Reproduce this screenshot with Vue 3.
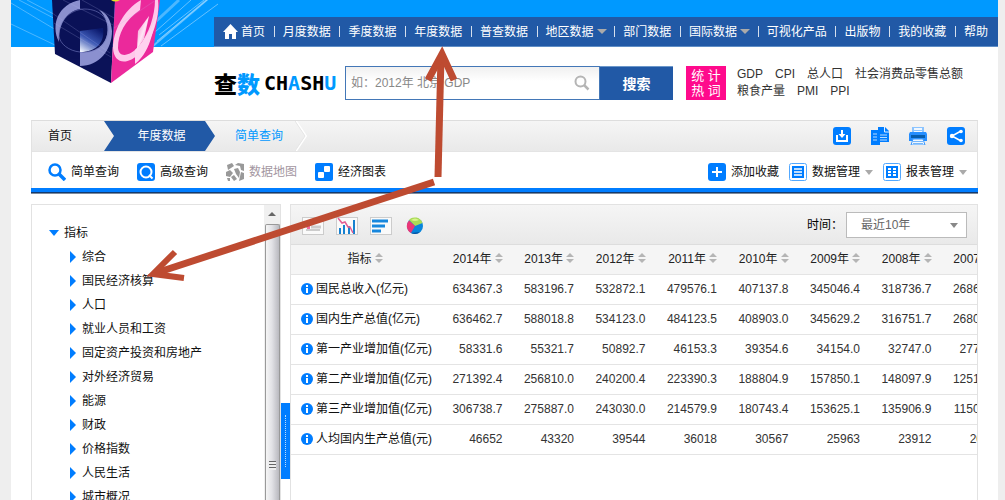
<script setup>
import { ref } from 'vue'

const nav = [
  { label: '首页', home: true },
  { label: '月度数据' },
  { label: '季度数据' },
  { label: '年度数据' },
  { label: '普查数据' },
  { label: '地区数据', menu: true },
  { label: '部门数据' },
  { label: '国际数据', menu: true },
  { label: '可视化产品' },
  { label: '出版物' },
  { label: '我的收藏' },
  { label: '帮助' },
]

const hotWords = ['GDP', 'CPI', '总人口', '社会消费品零售总额', '粮食产量', 'PMI', 'PPI']

const tree = [
  '综合', '国民经济核算', '人口', '就业人员和工资', '固定资产投资和房地产',
  '对外经济贸易', '能源', '财政', '价格指数', '人民生活', '城市概况',
]

const years = ['2014年', '2013年', '2012年', '2011年', '2010年', '2009年', '2008年', '2007年']
const rows = [
  { name: '国民总收入(亿元)', values: ['634367.3', '583196.7', '532872.1', '479576.1', '407137.8', '345046.4', '318736.7', '268631.0'] },
  { name: '国内生产总值(亿元)', values: ['636462.7', '588018.8', '534123.0', '484123.5', '408903.0', '345629.2', '316751.7', '268019.4'] },
  { name: '第一产业增加值(亿元)', values: ['58331.6', '55321.7', '50892.7', '46153.3', '39354.6', '34154.0', '32747.0', '27788.0'] },
  { name: '第二产业增加值(亿元)', values: ['271392.4', '256810.0', '240200.4', '223390.3', '188804.9', '157850.1', '148097.9', '125145.4'] },
  { name: '第三产业增加值(亿元)', values: ['306738.7', '275887.0', '243030.0', '214579.9', '180743.4', '153625.1', '135906.9', '115090.9'] },
  { name: '人均国内生产总值(元)', values: ['46652', '43320', '39544', '36018', '30567', '25963', '23912', '20337'] },
]

const keyword = ref('')
const period = ref('10')
</script>

<template>
  <div class="page">
    <header class="banner">
      <svg class="cube" viewBox="0 0 210 90" aria-hidden="true">
        <defs>
          <linearGradient id="ball" x1="0.7" y1="0" x2="0.1" y2="1">
            <stop offset="0" stop-color="#0c1a6e" />
            <stop offset="0.5" stop-color="#3c58b4" />
            <stop offset="1" stop-color="#eef2fc" />
          </linearGradient>
          <linearGradient id="sheen" x1="0" y1="0" x2="1" y2="1">
            <stop offset="0" stop-color="#f47cc4" />
            <stop offset="0.5" stop-color="#ffe6f6" />
            <stop offset="1" stop-color="#f04cae" />
          </linearGradient>
        </defs>
        <g stroke="#a8dcff" fill="none">
          <path d="M0 3l55 33M0 24l46 22M8 0l46 24M16 0l38 20" stroke-width="1" opacity=".45" />
          <path d="M142 46L198 -2" stroke-width="2" opacity=".6" />
          <path d="M150 46L207 4M148 35l45-35M144 32l36-32M146 41l50-41" stroke-width="1" opacity=".6" />
          <path d="M140 26l28-26" stroke-width="3" opacity=".45" />
        </g>
        <path d="M41 0H104L100 83L44 54Z" fill="#0b1258" />
        <path d="M104 0H149L142 52L100 83Z" fill="#ec2a9c" />
        <path d="M69 0C48 4 39 24 48 42C47 24 56 11 69 9Z" fill="#8b90cf" />
        <path d="M88 10C95 16 99 28 95 38C91 48 82 53 69 52V66C88 66 101 50 101 31C100 20 96 13 88 10Z" fill="#8b90cf" />
        <path d="M48 36C48 20 59 10 73 9C91 9 99 21 97 33C94 48 83 53 69 52C58 51 49 44 48 36" fill="none" stroke="#7379be" stroke-width="1" opacity=".6" />
        <path d="M69 31L92 28C94 42 86 52 69 52Z" fill="url(#ball)" />
        <path d="M130 0C112 10 102 32 102 48C103 64 116 66 129 53C142 40 149 16 147 0H144C144 15 138 34 128 46C118 57 108 58 107 48C107 34 114 20 129 10Z" fill="#ffc8ea" />
        <path d="M124 50V64C133 57 138 46 141 35L147 12C141 27 134 41 124 50Z" fill="#ffd3ef" />
        <path d="M127 31L138 16L133 39L126 49Z" fill="url(#sheen)" />
        <path d="M41 13L99 53M43 23l57 34M52 0l50 25M71 0l32 18M103 28L145 0" stroke="#b8b8ec" stroke-width="1" opacity=".2" />
        <path d="M100 0Q104 3 109 0Z" fill="#e8e024" />
      </svg>
      <nav class="nav">
        <a v-for="item in nav" :key="item.label" href="#">
          <svg v-if="item.home" class="home" viewBox="0 0 15 15" aria-hidden="true">
            <path d="M7.500 0L15 8H13V15H9V10H6V15H2V8H0Z" fill="#fff" />
          </svg>{{ item.label }}<i v-if="item.menu" class="caret"></i>
        </a>
      </nav>
    </header>

    <section class="search-row">
      <div class="brand"><span class="cn">查<b>数</b></span><span class="en">CH<b>A</b>SH<b>U</b></span></div>
      <form class="search" @submit.prevent>
        <div class="field">
          <input v-model="keyword" type="text" aria-label="搜索关键词" placeholder="如：2012年 北京 GDP" />
          <svg viewBox="0 0 16 16" aria-hidden="true">
            <circle cx="6.500" cy="6.500" r="5" fill="none" stroke="#b5b5b5" stroke-width="2" />
            <path d="M10 10l4.500 4.500" stroke="#b5b5b5" stroke-width="2.500" />
          </svg>
        </div>
        <button type="submit">搜索</button>
      </form>
      <div class="hot-badge">统 计<br />热 词</div>
      <div class="hot-words"><a v-for="w in hotWords" :key="w" href="#">{{ w }}</a></div>
    </section>

    <main class="content">
      <section class="top-box">
        <div class="crumbs">
          <a class="crumb-home" href="#">首页</a>
          <a class="crumb-year" href="#">年度数据</a>
          <a class="crumb-now" href="#">简单查询</a>
          <svg class="chevron" viewBox="0 0 12 30" aria-hidden="true">
            <path d="M1 0L11 15L1 30" fill="none" stroke="#fff" stroke-width="2" />
            <path d="M0 0L10 15L0 30" fill="none" stroke="#e4e4e4" stroke-width="1" />
          </svg>
          <div class="actions">
            <button type="button" aria-label="下载">
              <svg viewBox="0 0 18 18"><rect width="18" height="18" rx="3" fill="#007dff" /><path d="M4 8v6h10V8" fill="none" stroke="#fff" stroke-width="2" /><path d="M9 3v5" stroke="#fff" stroke-width="2" /><path d="M5.500 7h7L9 11Z" fill="#fff" /></svg>
            </button>
            <button type="button" aria-label="复制">
              <svg viewBox="0 0 18 18"><path d="M0 3h7v12h2v3H0Z" fill="#007dff" /><path d="M7 0h7l4 4v11H7Z" fill="#007dff" /><path d="M13.500 0v5H18" fill="none" stroke="#e8f2ff" /><path d="M2 7h4M2 10h4M2 13h4M9 8h7M9 10.500h7M9 13h7" stroke="#b9dcff" /></svg>
            </button>
            <button type="button" aria-label="打印">
              <svg viewBox="0 0 18 18"><path d="M3 0h12v6H3Z" fill="#8cc4ff" /><path d="M5 1h8v5H5Z" fill="#eff7ff" /><path d="M5 3.500h8" stroke="#8cc4ff" /><path d="M1 5h16l1 2v7H0V7Z" fill="#258eff" /><path d="M2 8h14v3H2Z" fill="#075dad" /><path d="M4 12h10l2 6H2Z" fill="#eff7ff" stroke="#3998ff" /><path d="M4 14.500h10M4 16.500h10" stroke="#75b6fa" /></svg>
            </button>
            <button type="button" aria-label="分享">
              <svg viewBox="0 0 18 18"><rect width="18" height="18" rx="3" fill="#007dff" /><path d="M14 4L5 9l9 5" fill="none" stroke="#fff" stroke-width="1.500" /><g fill="#fff"><circle cx="5" cy="9" r="2.200" /><circle cx="14" cy="4.500" r="1.800" /><circle cx="14" cy="13.500" r="1.800" /></g></svg>
            </button>
          </div>
        </div>
        <div class="tools">
          <div class="tools-left">
            <a href="#"><svg viewBox="0 0 18 18"><circle cx="7" cy="7" r="5.500" fill="none" stroke="#007dff" stroke-width="2.500" /><path d="M11 11l6 6" stroke="#007dff" stroke-width="3.500" /></svg>简单查询</a>
            <a href="#"><svg viewBox="0 0 18 18"><rect width="18" height="18" rx="3" fill="#007dff" /><circle cx="9" cy="9" r="5.500" fill="none" stroke="#fff" stroke-width="2" /><path d="M12 12l3.500 3.500" stroke="#fff" stroke-width="2" /></svg>高级查询</a>
            <a class="muted" href="#"><svg viewBox="0 0 18 18"><g fill="#999"><path d="M1 2l5-2 2 3-6 4Z" /><path d="M9 2l3-2 6 1v7l-3-1-1-4Z" /><path d="M0 9l4-2 3 3-3 4-4-1Z" /><path d="M8 6l4-1 2 4-1 6-3-4Z" /><path d="M5 14l3-2 3 4-3 2Z" /><path d="M15 9l3 1v6l-5 2Z" /><path d="M1 15l3 0v3H2Z" /></g></svg>数据地图</a>
            <a href="#"><svg viewBox="0 0 18 18"><rect width="18" height="18" rx="2" fill="#007dff" /><rect x="9" y="3" width="6" height="6" rx="1" fill="#fff" /><rect x="3" y="9" width="6" height="6" rx="1" fill="#fff" /></svg>经济图表</a>
          </div>
          <div class="tools-right">
            <a href="#"><svg viewBox="0 0 18 18"><rect width="18" height="18" rx="3" fill="#007dff" /><path d="M9 4v10M4 9h10" stroke="#fff" stroke-width="2" /></svg>添加收藏</a>
            <a href="#"><svg viewBox="0 0 18 18"><rect x=".5" y=".5" width="17" height="17" rx="2" fill="#fff" stroke="#52a8ff" /><rect x="3" y="3" width="12" height="12" fill="#007dff" /><path d="M5 6h8M5 9h8M5 12h8" stroke="#fff" stroke-width="1.500" /></svg>数据管理<i class="caret"></i></a>
            <a href="#"><svg viewBox="0 0 18 18"><rect x=".5" y=".5" width="17" height="17" rx="2" fill="#fff" stroke="#52a8ff" /><rect x="3" y="3" width="12" height="12" fill="#007dff" /><path d="M5 6h3M5 9h3M5 12h3M10 6h3M10 9h3M10 12h3" stroke="#fff" stroke-width="2" /></svg>报表管理<i class="caret"></i></a>
          </div>
        </div>
      </section>

      <div class="columns">
        <aside class="side">
          <ul class="tree">
            <li class="root"><i class="open"></i><a href="#">指标</a></li>
            <li v-for="t in tree" :key="t"><i class="closed"></i><a href="#">{{ t }}</a></li>
          </ul>
          <div class="scroll">
            <i class="up"></i>
            <div class="thumb"><i></i></div>
          </div>
        </aside>
        <div class="gutter"><button type="button" class="handle" aria-label="收起侧栏"><i></i></button></div>
        <section class="panel">
          <div class="panel-bar">
            <div class="views">
              <button type="button" aria-label="表格">
                <svg viewBox="0 0 22 18"><rect x=".5" y=".5" width="21" height="17" fill="#fafafa" stroke="#ccc" /><path d="M4 5h5M4 10h2M4 13h14" stroke="#ccc" stroke-width="2" /><path d="M9 10h10" stroke="#ccc" stroke-width="3" /><path d="M5 8h3v4H5Z" fill="#f46a9e" /></svg>
              </button>
              <button type="button" aria-label="折线图">
                <svg viewBox="0 0 22 18"><rect x=".5" y=".5" width="21" height="17" fill="#fafafa" stroke="#ccc" /><path d="M4 11v6M8 8v9M13 9v8M18 3v14" stroke="#1681d0" stroke-width="2" /><path d="M2 1l4 5 3-1 3 5 2 0 3 6" fill="none" stroke="#e45e93" stroke-width="1.500" /></svg>
              </button>
              <button type="button" aria-label="条形图">
                <svg viewBox="0 0 22 18"><rect x=".5" y=".5" width="21" height="17" fill="#fafafa" stroke="#ccc" /><path d="M2 4h16M2 9h13M2 14h9" stroke="#1787dd" stroke-width="3" /></svg>
              </button>
              <button type="button" aria-label="饼图">
                <svg viewBox="0 0 22 18"><circle cx="11" cy="9" r="8" fill="#0785dc" /><path d="M11 9L5 3A8 8 0 0 1 18.500 6Z" fill="#a9db55" /><path d="M11 9L5 3.500A8 8 0 0 0 7 16Z" fill="#e93678" /><path d="M7 16A8 8 0 0 0 16 15Z" fill="#0952a0" /><path d="M7 3Q11 0 15 3Q11 5 7 3" fill="#d8f38c" /></svg>
              </button>
            </div>
            <label class="period"><span>时间：</span>
              <span class="select-wrap">
                <select v-model="period">
                  <option value="10">最近10年</option>
                </select>
                <i class="caret"></i>
              </span>
            </label>
          </div>
          <table>
            <thead>
              <tr>
                <th class="name-head">指标<svg class="sort" viewBox="0 0 8 10"><path d="M0 4L4 0L8 4ZM0 6H8L4 10Z" fill="#b5b5b5" /></svg></th>
                <th v-for="y in years" :key="y">{{ y }}<svg class="sort" viewBox="0 0 8 10"><path d="M0 4L4 0L8 4ZM0 6H8L4 10Z" fill="#b5b5b5" /></svg></th>
              </tr>
            </thead>
            <tbody>
              <tr v-for="r in rows" :key="r.name">
                <td class="name">
                  <svg class="info" viewBox="0 0 12 12"><circle cx="6" cy="6" r="6" fill="#007dff" /><path d="M5 2h2v2H5ZM5 5h2v5H5Z" fill="#fff" /></svg>{{ r.name }}
                </td>
                <td v-for="(v, i) in r.values" :key="i">{{ v }}</td>
              </tr>
            </tbody>
          </table>
        </section>
      </div>
    </main>

    <svg class="arrows" width="1005" height="500" viewBox="0 0 1005 500" aria-hidden="true">
      <g fill="none" stroke="#be4b31" stroke-width="7">
        <path d="M438 177L441 56" />
        <path d="M428 80L442 54L454 80" />
        <path d="M434 182L156 273" />
        <path d="M175 252L153 274L184 278" stroke-width="6" stroke-miterlimit="10" />
      </g>
    </svg>
  </div>
</template>

<style>
body { margin: 0; background: #eee; }
</style>

<style scoped>
* { box-sizing: border-box; }
.page {
  height: 100vh;
  margin: 0 7px 0 11px;
  display: flex;
  flex-direction: column;
  overflow: hidden;
  background: #fff;
  color: #111;
  font: 12px/18px "Liberation Sans", "Noto Sans CJK SC", sans-serif;
}
a { color: inherit; text-decoration: none; }
button { padding: 0; border: 0; background: none; font: inherit; cursor: pointer; }
svg { display: block; flex: none; }
.caret {
  flex: none;
  display: inline-block;
  border: 5px solid transparent;
  border-top-color: #aaa;
  border-bottom: 0;
}

.banner {
  position: relative;
  flex: none;
  display: flex;
  align-items: flex-end;
  height: 47px;
  padding-left: 203px;
  background: #09f;
}
.cube { position: absolute; left: 0; top: 0; width: 210px; height: 90px; clip-path: polygon(0 0, 100% 0, 100% 47px, 145px 47px, 145px 100%, 40px 100%, 40px 47px, 0 47px); }
.nav {
  flex: 1;
  display: flex;
  align-items: center;
  justify-content: space-between;
  height: 30px;
  padding: 0 10px 0 9px;
  background: #2159a6;
  border-bottom: 1px solid #5f8ec6;
  color: #fff;
  white-space: nowrap;
}
.nav a { display: flex; align-items: center; line-height: 18px; }
.nav a + a::before { content: ""; width: 1px; height: 11px; margin-right: 8px; background: #d5dfed; }
.nav .caret { margin-left: 3px; margin-right: -1px; }
.home { width: 15px; height: 15px; margin-right: 3px; }

.search-row {
  flex: none;
  display: flex;
  align-items: center;
  height: 73px;
  padding: 0 17px 1px 203px;
}
.brand { width: 131px; display: flex; align-items: center; white-space: nowrap; font-weight: 900; color: #000; }
.brand b { color: #09f; font-weight: 900; }
.cn { font-size: 23px; line-height: 28px; width: 50px; font-family: "Noto Sans CJK SC", sans-serif; }
.en { font: bold 20px/28px "DejaVu Sans Mono", monospace; }
.search { display: flex; width: 328px; height: 34px; }
.field {
  flex: 1;
  display: flex;
  align-items: center;
  padding-right: 9px;
  border: 1px solid #4377b7;
  background: linear-gradient(#f0f0f0, #fff 14px);
}
.field input {
  flex: 1;
  min-width: 0;
  padding: 0 5px;
  border: 0;
  outline: 0;
  background: none;
  font: inherit;
  color: #555;
}
.field input::placeholder { color: #888; opacity: 1; }
.field svg { width: 16px; height: 16px; }
.search button { width: 73px; background: #2159a6; border-top: 1px solid #6b97ca; color: #fff; font-size: 14px; font-weight: bold; }
.hot-badge {
  width: 40px;
  height: 34px;
  margin: 0 11px 0 13px;
  padding-top: 2px;
  background: #ff0a8c;
  color: #fff;
  font-size: 13px;
  line-height: 15px;
  text-align: center;
}
.hot-words { flex: 1; display: flex; flex-wrap: wrap; column-gap: 12px; line-height: 17px; color: #333; }

.content { flex: 1; min-height: 0; display: flex; flex-direction: column; padding: 0 20px; }
.top-box { flex: none; border: 1px solid #e2e2e2; border-top-color: #ddd; border-bottom: 0; }
.crumbs { display: flex; align-items: center; height: 31px; border-bottom: 1px solid #e4e4e4; background: linear-gradient(#f5f5f5, #e9e9e9); }
.crumb-home { width: 72px; padding-left: 16px; }
.crumb-year {
  width: 111px;
  height: 30px;
  padding-left: 4px;
  line-height: 30px;
  text-align: center;
  color: #fff;
  background: #2159a6;
  clip-path: polygon(0 0, 101px 0, 100% 50%, 101px 100%, 0 100%, 10px 50%);
}
.crumb-now { margin: 0 12px 0 20px; color: #09f; }
.chevron { width: 12px; height: 30px; }
.actions { margin-left: auto; display: flex; gap: 20px; padding-right: 12px; }
.actions svg { width: 18px; height: 18px; }
.tools { display: flex; justify-content: space-between; height: 36px; padding: 4px 10px 0 16px; }
.tools-left, .tools-right, .tools a { display: flex; align-items: center; white-space: nowrap; }
.tools-left { gap: 18px; }
.tools-right { gap: 10px; }
.tools a { gap: 5px; height: 34px; }
.tools a.muted { color: #a396a1; }
.tools svg { width: 18px; height: 18px; }
.tools .caret, .select-wrap .caret { border-width: 5px 4px 0; }
.top-box::after { content: ""; display: block; height: 6px; margin: 0 -1px; background: linear-gradient(#007dff 4px, #123a70 4px, #123a70 5px, #7d8b9d 5px); }

.columns { flex: 1; min-height: 0; display: flex; margin-top: 10px; }
.side { flex: none; display: flex; width: 250px; border: 1px solid #e2e2e2; overflow: hidden; border-bottom: 0; }
.tree { flex: 1; margin: 0; padding: 16px 0 0 38px; list-style: none; white-space: nowrap; }
.tree li { display: flex; align-items: center; height: 24px; line-height: 24px; }
.tree .root { margin-left: -21px; }
.open { margin-right: 5px; border: solid transparent; border-width: 6px 5px 0; border-top-color: #007dff; }
.closed { margin-right: 6px; border: solid transparent; border-width: 6px 0 6px 6px; border-left-color: #007dff; }
.scroll { width: 16px; display: flex; flex-direction: column; align-items: center; background: #f0f0f0; }
.up { margin: 7px 0 8px; border: solid transparent; border-width: 0 4px 4px; border-bottom-color: #666; }
.thumb {
  flex: 1;
  width: 15px;
  display: flex;
  justify-content: center;
  align-items: flex-end;
  padding-bottom: 30px;
  border: 1px solid #999;
  border-bottom: 0;
  border-radius: 2px 2px 0 0;
  background: linear-gradient(90deg, #f5f5f5, #e2e2e6 45%, #b9b9bf);
}
.thumb i { width: 7px; height: 9px; background: repeating-linear-gradient(#666 0 1px, #eee 1px 3px); }
.gutter { flex: none; width: 9px; display: flex; align-items: flex-end; padding-bottom: 21px; }
.handle { width: 9px; height: 76px; display: flex; justify-content: center; align-items: center; background: #007dff; }
.handle i { height: 52px; border-left: 1px dotted #b9dcff; }

.panel { flex: 1; min-width: 0; border: 1px solid #e2e2e2; border-bottom: 0; overflow: hidden; }
.panel-bar {
  display: flex;
  align-items: center;
  justify-content: space-between;
  height: 40px;
  padding: 0 10px 0 11px;
  border-bottom: 1px solid #ddd;
  background: linear-gradient(#f5f5f5, #e9e9e9);
}
.views { display: flex; gap: 12px; padding-top: 2px; }
.views svg { width: 22px; height: 18px; }
.period { display: flex; align-items: center; gap: 3px; color: #000; }
.select-wrap { position: relative; display: flex; }
.select-wrap select {
  appearance: none;
  width: 121px;
  height: 26px;
  padding: 0 24px 0 14px;
  border: 1px solid #bbb;
  border-radius: 0;
  background: #fff;
  color: #666;
  font: inherit;
}
.select-wrap .caret { position: absolute; right: 9px; top: 11px; border-top-color: #888; }

table { width: 720px; table-layout: fixed; border-collapse: collapse; }
th, td { height: 30px; padding: 0 8px 1px 0; border-bottom: 1px solid #e4e4e4; text-align: right; white-space: nowrap; color: #333; font-weight: normal; }
th { height: 29px; padding: 0 8px 0 0; background: #f5f5f5; color: #222; }
.name-head { width: 148px; padding: 0; text-align: center; }
.name { padding: 0 0 0 10px; text-align: left; color: #111; }
.sort { display: inline-block; width: 8px; height: 10px; margin-left: 3px; }
.info { display: inline-block; width: 12px; height: 12px; margin-right: 3px; vertical-align: -2px; }

.arrows { position: absolute; left: 0; top: 0; pointer-events: none; }
</style>
